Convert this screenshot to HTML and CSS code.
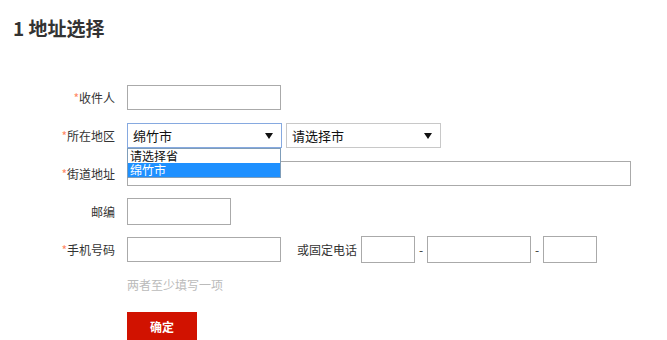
FILE: index.html
```html
<!DOCTYPE html>
<html lang="zh-CN">
<head>
    <meta charset="UTF-8">
    <title>地址选择</title>
    <link rel="stylesheet" href="styles.css">
</head>
<body>
    <h2 class="title">1 地址选择</h2>
    <form class="addr-form">
        <div class="row">
            <label class="lbl"><em>*</em>收件人</label>
            <input class="ipt w-mid" type="text">
        </div>
        <div class="row">
            <label class="lbl"><em>*</em>所在地区</label>
            <div class="sel focus">
                <span>绵竹市</span>
                <svg class="arrow" width="8" height="6" viewBox="0 0 8 6"><path d="M0 0h8L4 6z" fill="#111"/></svg>
                <ul class="drop">
                    <li>请选择省</li>
                    <li class="on">绵竹市</li>
                </ul>
            </div>
            <div class="sel">
                <span>请选择市</span>
                <svg class="arrow" width="8" height="6" viewBox="0 0 8 6"><path d="M0 0h8L4 6z" fill="#111"/></svg>
            </div>
        </div>
        <div class="row">
            <label class="lbl"><em>*</em>街道地址</label>
            <input class="ipt w-long" type="text">
        </div>
        <div class="row">
            <label class="lbl">邮编</label>
            <input class="ipt w-short tall" type="text">
        </div>
        <div class="row">
            <label class="lbl"><em>*</em>手机号码</label>
            <input class="ipt w-mid" type="text">
            <span class="or">或固定电话</span>
            <input class="ipt w-tiny tall" type="text">
            <span class="dash">-</span>
            <input class="ipt w-short tall" type="text">
            <span class="dash">-</span>
            <input class="ipt w-tiny tall" type="text">
        </div>
        <p class="hint">两者至少填写一项</p>
        <button class="btn" type="button">确定</button>
    </form>
</body>
</html>
```
FILE: styles.css
```css
body {
    margin: 0;
    font-family: "Noto Sans CJK SC", "Microsoft YaHei", sans-serif;
    font-size: 12px;
    color: #333;
    background: #fff;
}

.title {
    margin: 0;
    padding: 16px 0 0 13px;
    height: 34px;
    font-size: 19px;
    line-height: 24px;
    font-weight: bold;
    color: #333;
}

.addr-form {
    padding-top: 35px;
}

.row {
    display: flex;
    align-items: center;
    height: 25px;
    margin-bottom: 13px;
}

.lbl {
    width: 115px;
    padding-right: 12px;
    text-align: right;
    line-height: 25px;
}

.lbl em {
    font-style: normal;
    color: #f86;
}

.ipt {
    box-sizing: border-box;
    height: 25px;
    border: 1px solid #aaa;
    padding: 0 4px;
    font-family: inherit;
    outline: none;
}

.ipt.tall {
    height: 27px;
}

.w-mid {
    width: 154px;
}

.w-long {
    width: 504px;
}

.w-short {
    width: 104px;
}

.w-tiny {
    width: 54px;
}

.sel {
    position: relative;
    box-sizing: border-box;
    width: 155px;
    height: 25px;
    margin-right: 4px;
    border: 1px solid #c8c8c8;
    display: flex;
    align-items: center;
    justify-content: space-between;
    padding: 0 6px 0 5px;
    font-size: 13px;
    color: #111;
}

.sel.focus {
    border-color: #86a9e0;
}

.arrow {
    margin-right: 2px;
}

.drop {
    position: absolute;
    top: 24px;
    left: -1px;
    width: 154px;
    box-sizing: border-box;
    margin: 0;
    padding: 0;
    list-style: none;
    background: #fff;
    border: 1px solid #7f9db9;
    z-index: 2;
}

.drop li {
    height: 14px;
    line-height: 14px;
    padding-left: 2px;
    font-size: 12px;
    color: #111;
}

.drop li.on {
    background: #1e90ff;
    color: #fff;
}

.or {
    margin: 0 4px 0 16px;
}

.dash {
    width: 12px;
    text-align: center;
}

.hint {
    margin: 14px 0 0 127px;
    line-height: 18px;
    color: #bbb;
}

.btn {
    margin: 18px 0 0 127px;
    width: 70px;
    height: 28px;
    border: 0;
    background: #d11200;
    color: #fff;
    font-family: inherit;
    font-size: 12px;
    font-weight: bold;
}
```
